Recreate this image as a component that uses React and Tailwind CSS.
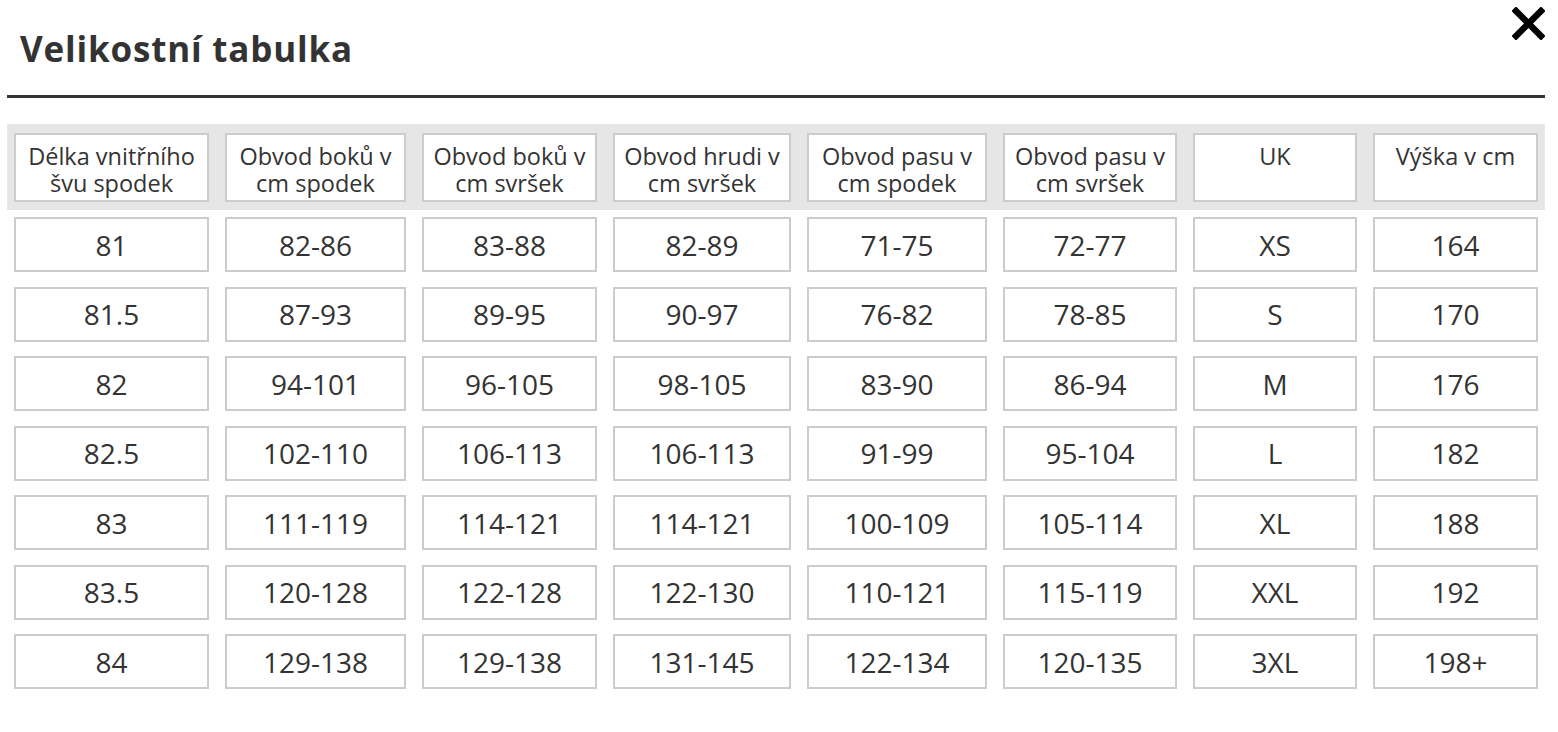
import React from "react";

const headers = [
  ["Délka vnitřního", "švu spodek"],
  ["Obvod boků v", "cm spodek"],
  ["Obvod boků v", "cm svršek"],
  ["Obvod hrudi v", "cm svršek"],
  ["Obvod pasu v", "cm spodek"],
  ["Obvod pasu v", "cm svršek"],
  ["UK"],
  ["Výška v cm"],
];

const rows = [
  ["81", "82-86", "83-88", "82-89", "71-75", "72-77", "XS", "164"],
  ["81.5", "87-93", "89-95", "90-97", "76-82", "78-85", "S", "170"],
  ["82", "94-101", "96-105", "98-105", "83-90", "86-94", "M", "176"],
  ["82.5", "102-110", "106-113", "106-113", "91-99", "95-104", "L", "182"],
  ["83", "111-119", "114-121", "114-121", "100-109", "105-114", "XL", "188"],
  ["83.5", "120-128", "122-128", "122-130", "110-121", "115-119", "XXL", "192"],
  ["84", "129-138", "129-138", "131-145", "122-134", "120-135", "3XL", "198+"],
];

const cols = "grid grid-cols-[195px_181px_175px_178px_180px_174px_164px_165px] gap-x-[16px]";

export default function App() {
  return (
    <div className="relative w-[1558px] h-[732px] bg-white text-[#333] font-['Open_Sans',sans-serif]">
      <button className="absolute right-[13px] top-[7px] w-[33px] h-[33px]" aria-label="close">
        <svg viewBox="0 0 33 33" width="33" height="33">
          <path d="M4 4 L29 29 M29 4 L4 29" stroke="#000" strokeWidth="6.5" strokeLinecap="square" fill="none" />
        </svg>
      </button>

      <h2 className="pl-[20px] pt-[27px] text-[35px] leading-[44px] font-bold tracking-[0.8px]">
        Velikostní tabulka
      </h2>
      <div className="ml-[7px] w-[1538px] mt-[24px] h-[3px] bg-[#333]" />

      <div className="ml-[7px] w-[1538px] mt-[26px]">
        <div className="bg-[#e6e6e6] pt-[9px] pb-[8px] px-[7px]">
          <div className={cols}>
            {headers.map((h, i) => (
              <div
                key={i}
                className="h-[69px] border-2 border-[#ccc] bg-white pt-[8px] text-center text-[23.5px] leading-[27px]"
              >
                {h.map((line, j) => (
                  <div key={j}>{line}</div>
                ))}
              </div>
            ))}
          </div>
        </div>

        <div className="px-[7px] pt-[7px] flex flex-col gap-y-[14.5px]">
          {rows.map((r, i) => (
            <div key={i} className={cols}>
              {r.map((v, j) => (
                <div
                  key={j}
                  className="h-[55px] border-2 border-[#ccc] bg-white flex items-center justify-center text-[28px]"
                >
                  {v}
                </div>
              ))}
            </div>
          ))}
        </div>
      </div>
    </div>
  );
}
